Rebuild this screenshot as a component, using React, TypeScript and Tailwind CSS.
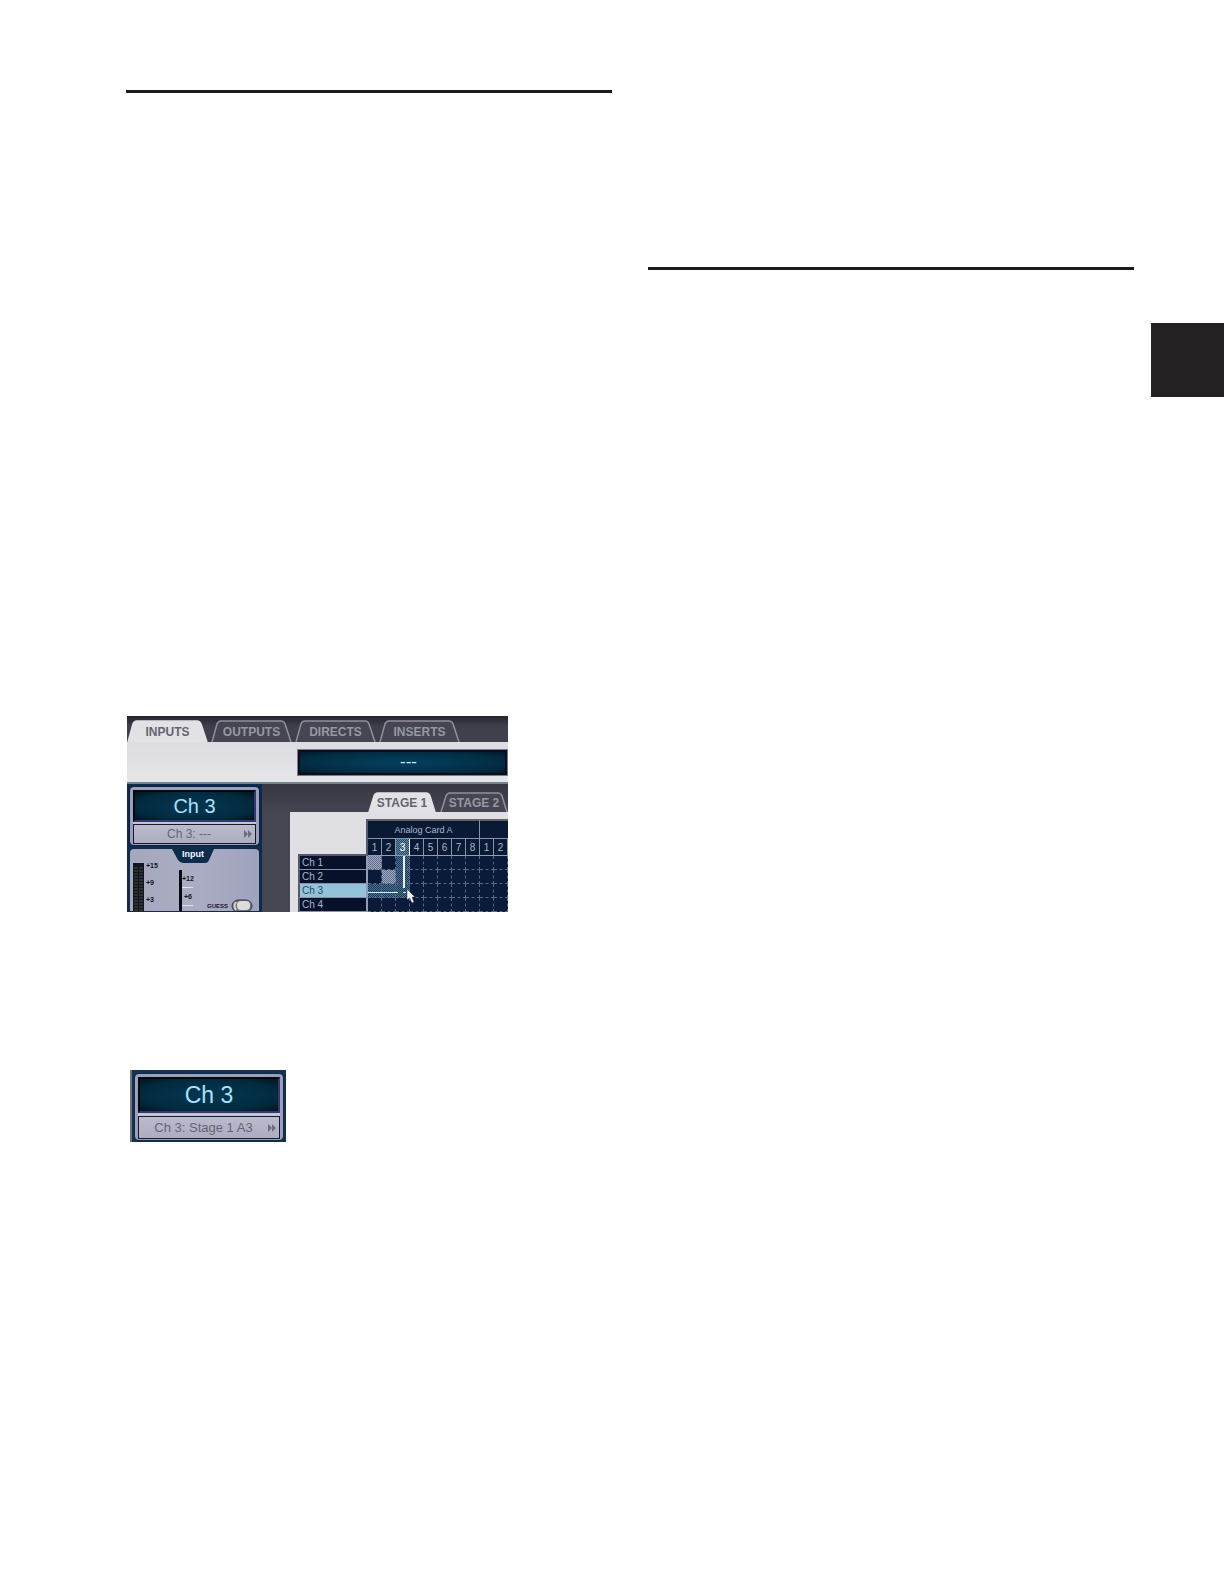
const mainTabs = [
  { label: "INPUTS", active: true },
  { label: "OUTPUTS", active: false },
  { label: "DIRECTS", active: false },
  { label: "INSERTS", active: false },
];

const stageTabs = [
  { label: "STAGE 1", active: true },
  { label: "STAGE 2", active: false },
];

const columns = ["1", "2", "3", "4", "5", "6", "7", "8", "1", "2"];
const rows = ["Ch 1", "Ch 2", "Ch 3", "Ch 4"];

function Tab({
  label,
  active,
  wide,
}: {
  label: string;
  active: boolean;
  wide?: boolean;
}) {
  const shape = wide
    ? "M1 26 L6 8 Q7 5 10 5 H70 Q73 5 74 8 L80 26"
    : "M1 20 L6 4 Q7 1 10 1 H58 Q61 1 62 4 L67 20";
  return (
    <button
      role="tab"
      aria-selected={active}
      className={
        wide
          ? "relative w-[81px] h-[26px] pt-[6px] shrink-0"
          : "relative w-[68px] h-[20px] pt-[2px] shrink-0"
      }
    >
      <svg
        className="absolute inset-0 w-full h-full"
        viewBox={wide ? "0 0 81 26" : "0 0 68 20"}
        fill={active ? "#e2e2e6" : "#454652"}
        stroke={active ? "#e2e2e6" : "#8f9099"}
        strokeWidth="1.5"
      >
        <path d={shape} />
      </svg>
      <span
        className={`relative block font-bold text-[12px] leading-4 whitespace-nowrap ${
          active ? "text-[#63646c]" : "text-[#9698a2]"
        }`}
      >
        {label}
      </span>
    </button>
  );
}

function Arrows() {
  return (
    <svg className="w-2 h-2 shrink-0" viewBox="0 0 8 8" fill="#6c6e80">
      <path d="M0 0 L4 4 L0 8 Z M4 0 L8 4 L4 8 Z" />
    </svg>
  );
}

function ChannelBox({
  name,
  source,
  large,
}: {
  name: string;
  source: string;
  large?: boolean;
}) {
  return (
    <div className="rounded border-[3px] border-b border-[#9c9ebb] bg-[#c3c4d4] shadow-[0_0_2px_#05101c]">
      <div
        className={`border-2 border-t-[#05080f] border-l-[#05080f] border-r-[#35386e] border-b-[#35386e] bg-[radial-gradient(ellipse_at_center,#03344e_20%,#022a3e_70%,#01131f)] text-center text-[#a9e2fb] ${
          large ? "h-[36px] text-[23px] leading-8" : "h-[32px] text-[20px] leading-7"
        }`}
      >
        {name}
      </div>
      <button
        className={`flex w-full items-center border border-[#17182a] bg-linear-to-b from-[#babbcb] to-[#acadc0] pr-[3px] text-[#63657a] ${
          large ? "mt-[3px] h-[23px] text-[13px]" : "mt-[2px] h-[20px] text-[12px]"
        }`}
      >
        <span className="flex-1">{source}</span>
        <Arrows />
      </button>
    </div>
  );
}

function InputSection() {
  return (
    <div className="mt-1 rounded-t bg-linear-to-r from-[#a5a7be] via-[#abadc3] to-[#9fa2bd] overflow-hidden">
      <svg className="block w-full" viewBox="0 0 129 62" aria-label="Input">
        <path d="M42 0 L48 11 Q50 14 53 14 H75 Q78 14 79 11 L84 0 Z" fill="#0d2c4c" />
        <rect x="3" y="14" width="11" height="48" fill="#0b1726" />
        <path d="M6 18 V62 M11 18 V62" stroke="#332f26" strokeWidth="4" strokeDasharray="2 1" />
        <rect x="49" y="21" width="3" height="41" fill="#08090f" />
        <path d="M52 38.500 H63 M52 56.500 H63" stroke="#e4e4ec" />
        <g fontFamily="Liberation Sans" fontWeight="bold" fill="#12131d" fontSize="7">
          <text x="16" y="19">+15</text>
          <text x="16" y="36">+9</text>
          <text x="16" y="53">+3</text>
          <text x="52" y="32">+12</text>
          <text x="54" y="50">+6</text>
          <text x="77" y="59" fontSize="6">GUESS</text>
          <text x="63" y="8" fontSize="9" fill="#f4f6fb" textAnchor="middle">Input</text>
        </g>
        <rect x="102" y="51" width="20" height="12" rx="6" fill="#707078" stroke="#3c3d46" />
        <rect x="107" y="52" width="13" height="9" rx="4" fill="#dcdcdc" />
        <path d="M106 53 Q103 57 106 61" fill="none" stroke="#d4d4d8" strokeWidth="2" />
      </svg>
    </div>
  );
}

function cellStyle(row: number, col: number) {
  if (row === col && row < 2)
    return "bg-[repeating-conic-gradient(#a0a9bd_0_25%,#5f6c8b_0_50%)] bg-size-[2px_2px]";
  if ((col === 2 && row <= 2) || (row === 2 && col < 2))
    return "bg-[repeating-conic-gradient(#4f7490_0_25%,#19365a_0_50%)] bg-size-[2px_2px]";
  return "";
}

function PatchGrid() {
  return (
    <div className="relative ml-2 mt-[7px]">
      <table className="table-fixed border-separate border-spacing-0 w-[210px] text-[10px] text-[#a9b6cf]">
        <colgroup>
          <col className="w-[70px]" />
          {columns.map((_, i) => (
            <col key={i} className="w-[14px]" />
          ))}
        </colgroup>
        <thead>
          <tr className="h-[20px]">
            <td rowSpan={2} className="p-0 border-b-2 border-r-2 border-[#55586a] bg-[#e0e0e4]" />
            <th
              colSpan={8}
              className="p-0 border-t-2 border-t-[#60626e] border-b border-b-[#8793ab] border-r border-r-[#8793ab] bg-[#0a1a35] text-[9px] font-normal leading-4"
            >
              Analog Card A
            </th>
            <th
              colSpan={2}
              aria-label="Analog Card B"
              className="p-0 border-t-2 border-t-[#60626e] border-b border-b-[#8793ab] bg-[#0a1a35]"
            />
          </tr>
          <tr className="h-[17px]">
            {columns.map((c, i) => (
              <th
                key={i}
                className={`p-0 border-r border-b border-b-[#8d9db5] font-normal leading-[15px] ${
                  i === 2
                    ? "bg-[repeating-conic-gradient(#5d89a3_0_25%,#28486a_0_50%)] bg-size-[2px_2px] text-white border-r-white"
                    : "bg-[#0a1a35] border-r-[#8793ab]"
                }`}
              >
                {c}
              </th>
            ))}
          </tr>
        </thead>
        <tbody>
          {rows.map((name, r) => (
            <tr key={name} className="h-[14px]">
              <th
                className={`p-0 pl-[2px] border-l-2 border-l-[#55586a] border-r-2 border-r-[#8d9db5] border-b border-b-[#8793ab] text-left font-normal leading-[13px] ${
                  r === 2 ? "bg-[#94c3d9] text-[#234b68]" : "bg-[#07122a]"
                }`}
              >
                {name}
              </th>
              {columns.map((_, c) => (
                <td
                  key={c}
                  className={`p-0 border-r border-b border-dashed border-[#566788] bg-[#0a1b3a] ${cellStyle(r, c)}`}
                />
              ))}
            </tr>
          ))}
        </tbody>
      </table>
      {/* crosshair and pointer */}
      <svg className="absolute left-[70px] top-[37px] w-[56px] h-[56px]" viewBox="0 0 56 56">
        <path d="M0 36.500 H30 M35 36.500 H38" stroke="#d3ecf5" />
        <path d="M36 0 V32" stroke="#e8f4f8" strokeWidth="2" />
        <path
          d="M39 33 L39 44 L41.500 42 L44 47 L46 46 L44 41 L47 41 Z"
          fill="#fff"
          stroke="#1b2434"
          strokeWidth="0.5"
        />
      </svg>
    </div>
  );
}

function PatchbayFigure() {
  return (
    <section className="w-full max-w-[381px] h-[196px] overflow-hidden bg-[#3b3c48]">
      <div role="tablist" className="flex gap-[3px] bg-linear-to-b from-[#24252c] to-[#3f404c] to-40%">
        {mainTabs.map((t) => (
          <Tab key={t.label} {...t} wide />
        ))}
      </div>
      <div className="flex justify-end h-[40px] pt-[7px] bg-linear-to-b from-[#dcdce1] to-[#e6e6e9]">
        <div className="w-[211px] h-[27px] border border-[#777b94] bg-[#0a0e1a] p-[2px]">
          <div className="h-full pl-3 bg-[radial-gradient(ellipse_at_center,#033b58_20%,#022c43_70%,#021a2a)] text-center text-[17px] leading-5 text-[#c5effb]">
            ---
          </div>
        </div>
      </div>
      <div className="flex border-t-2 border-[#73828e]">
        <div className="w-[135px] shrink-0 bg-[#0d2c4c] px-[3px] pt-[3px]">
          <ChannelBox name="Ch 3" source="Ch 3: ---" />
          <InputSection />
        </div>
        <div className="flex-1 min-w-0 pl-7 pt-2 bg-linear-to-b from-[#363741] to-[#454652] to-20%">
          <div role="tablist" className="flex gap-1 pl-[78px]">
            {stageTabs.map((t) => (
              <Tab key={t.label} {...t} />
            ))}
          </div>
          <div className="flow-root h-[120px] bg-[#e0e0e4]">
            <PatchGrid />
          </div>
        </div>
      </div>
    </section>
  );
}

export default function App() {
  return (
    <div className="flex min-h-screen bg-white font-['Liberation_Sans',Arial,sans-serif]">
      <main className="flex-1 grid grid-cols-2 gap-9 pl-[126px] pr-[17px] pt-[90px]">
        <div>
          <hr className="border-0 h-[3px] bg-[#1c1a1d]" />
          <div className="mt-[623px] ml-px">
            <PatchbayFigure />
          </div>
          <div className="mt-[158px] ml-1 w-[156px] h-[72px] overflow-hidden bg-[#123453] border-l-2 border-[#6d7377] pl-[3px] pr-[3px] pt-1">
            <ChannelBox name="Ch 3" source="Ch 3: Stage 1 A3" large />
          </div>
        </div>
        <div className="pt-[177px]">
          <hr className="border-0 h-[3px] bg-[#1c1a1d]" />
        </div>
      </main>
      <aside className="w-[73px] pt-[323px]">
        <div className="h-[74px] bg-[#242122]" />
      </aside>
    </div>
  );
}
